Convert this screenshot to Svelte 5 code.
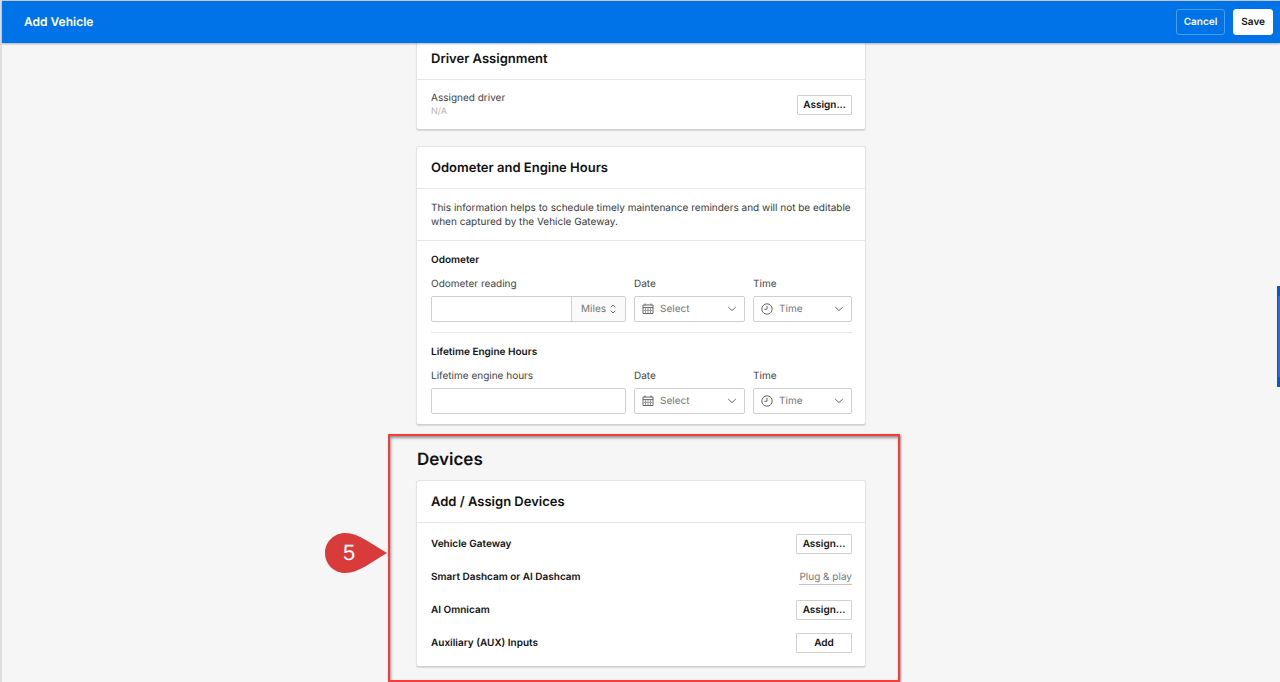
<script>
  const groups = [
    { id: "odometer", title: "Odometer", label: "Odometer reading", unit: true },
    { id: "engine", title: "Lifetime Engine Hours", label: "Lifetime engine hours", unit: false },
  ];

  const devices = [
    { name: "Vehicle Gateway", action: "Assign..." },
    { name: "Smart Dashcam or AI Dashcam", link: "Plug & play" },
    { name: "AI Omnicam", action: "Assign..." },
    { name: "Auxiliary (AUX) Inputs", action: "Add" },
  ];
</script>

{#snippet chevron()}
  <svg class="chevron" width="10" height="6" viewBox="0 0 10 6" aria-hidden="true">
    <path d="M1.2 1 L5 4.6 L8.8 1" />
  </svg>
{/snippet}

<div class="page">
  <header class="topbar">
    <h1>Add Vehicle</h1>
    <div class="topbar-actions">
      <button class="cancel">Cancel</button>
      <button class="save">Save</button>
    </div>
  </header>

  <main>
    <section class="card first">
      <h2>Driver Assignment</h2>
      <div class="driver">
        <div>
          <div class="label">Assigned driver</div>
          <div class="empty">N/A</div>
        </div>
        <button class="btn">Assign...</button>
      </div>
    </section>

    <section class="card">
      <h2>Odometer and Engine Hours</h2>
      <p class="info">
        This information helps to schedule timely maintenance reminders and will not be editable
        when captured by the Vehicle Gateway.
      </p>
      {#each groups as group}
        <div class="group">
          <h3>{group.title}</h3>
          <div class="fields">
            <div class="field">
              <label for="{group.id}-value">{group.label}</label>
              <div class="box">
                <input id="{group.id}-value" type="text" />
                {#if group.unit}
                  <div class="unit">
                    <select aria-label="Unit">
                      <option>Miles</option>
                      <option>Kilometers</option>
                    </select>
                    <svg width="6" height="10" viewBox="0 0 6 10" aria-hidden="true">
                      <path d="M0.7 3.3 L3 1 L5.3 3.3 M0.7 6.7 L3 9 L5.3 6.7" />
                    </svg>
                  </div>
                {/if}
              </div>
            </div>
            <div class="field">
              <label for="{group.id}-date">Date</label>
              <div class="box picker">
                <select id="{group.id}-date"><option>Select</option></select>
                <svg class="icon" width="12" height="12" viewBox="0 0 12 12" aria-hidden="true">
                  <path d="M1 2 H11 V10.5 H1 Z M1 4.6 H11 M3 0.5 V2.5 M9 0.5 V2.5" />
                  <path class="thin" d="M3.5 5 V10 M6 5 V10 M8.5 5 V10 M2 7.5 H10" />
                </svg>
                {@render chevron()}
              </div>
            </div>
            <div class="field">
              <label for="{group.id}-time">Time</label>
              <div class="box picker">
                <select id="{group.id}-time"><option>Time</option></select>
                <svg class="icon" width="12" height="12" viewBox="0 0 12 12" aria-hidden="true">
                  <circle cx="6" cy="6" r="5.2" />
                  <path d="M6 2.8 V6.3 H3.3" />
                </svg>
                {@render chevron()}
              </div>
            </div>
          </div>
        </div>
      {/each}
    </section>

    <section class="devices">
      <div class="pin">
        <svg width="63" height="40" viewBox="0 0 63 40" aria-hidden="true">
          <path d="M20 0 C9 0 0 9 0 20 C0 31 9 40 20 40 C34 40 46 29 62 20 C46 11 34 0 20 0 Z" />
        </svg>
        <span>5</span>
      </div>
      <h2 class="devices-title">Devices</h2>
      <div class="card">
        <h2>Add / Assign Devices</h2>
        <ul>
          {#each devices as device}
            <li>
              <span>{device.name}</span>
              {#if device.link}
                <a href="#plug-and-play">{device.link}</a>
              {:else}
                <button class="btn wide">{device.action}</button>
              {/if}
            </li>
          {/each}
        </ul>
      </div>
    </section>
  </main>

  <button class="side-tab" aria-label="Help"></button>
</div>

<style>
  :global(body) {
    background: #f6f6f6;
  }

  .page,
  .page * {
    box-sizing: border-box;
  }

  .page {
    min-height: 100vh;
    border-top: 1px solid #c9cdd0;
    border-left: 2px solid #dedede;
    background: #f6f6f6;
    color: #111;
    font-family: Inter, "Liberation Sans", sans-serif;
    font-size: 10px;
    line-height: 14px;
    text-rendering: geometricPrecision;
  }

  h1,
  h2,
  h3,
  p,
  ul {
    margin: 0;
    padding: 0;
  }

  button,
  input,
  select {
    margin: 0;
    font: inherit;
    color: inherit;
    text-rendering: inherit;
  }

  .topbar {
    position: relative;
    z-index: 1;
    display: flex;
    align-items: center;
    justify-content: space-between;
    height: 42px;
    padding: 0 7px 0 22px;
    background: #0073e8;
    box-shadow: 0 1px 2px rgba(0, 0, 0, 0.3);
  }

  h1 {
    color: #fff;
    font-size: 12px;
    font-weight: 600;
  }

  .topbar-actions {
    display: flex;
    gap: 8px;
  }

  .topbar-actions button {
    height: 26px;
    padding: 0 7px;
    border: 1px solid #fff;
    border-radius: 3px;
    background: #fff;
    font-weight: 600;
  }

  .topbar-actions .cancel {
    border-color: #4c9df0;
    background: transparent;
    color: #fff;
  }

  main {
    width: 450px;
    max-width: 100%;
    margin: 0 auto;
  }

  .card {
    margin-bottom: 16px;
    border: 1px solid #e3e3e3;
    border-bottom-color: #d0d0d0;
    border-radius: 3px;
    background: #fff;
    box-shadow: 0 1px 1px rgba(0, 0, 0, 0.12);
  }

  /* scrolled part way under the top bar */
  .first {
    margin-top: -6px;
  }

  .card h2 {
    height: 42px;
    padding: 0 14px;
    border-bottom: 1px solid #e6e6e6;
    font-size: 13px;
    font-weight: 600;
    line-height: 42px;
  }

  .driver {
    display: flex;
    align-items: center;
    justify-content: space-between;
    padding: 11px 13px 10px 14px;
  }

  .label,
  label {
    color: #444;
  }

  .empty {
    color: #b5b5b5;
    font-size: 9px;
  }

  .btn {
    height: 20px;
    padding: 0 5px;
    border: 1px solid #d0d0d0;
    border-radius: 1px;
    background: #fff;
    font-weight: 600;
    line-height: 14px;
  }

  .wide {
    width: 56px;
  }

  .info {
    padding: 12px 14px 11px;
    border-bottom: 1px solid #e6e6e6;
    color: #3a3a3a;
  }

  .group {
    margin: 0 13px 0 14px;
    padding: 12px 0 10px;
  }

  .group + .group {
    border-top: 1px solid #e6e6e6;
  }

  h3 {
    margin-bottom: 10px;
    font-size: 10px;
    font-weight: 600;
  }

  .fields {
    display: grid;
    grid-template-columns: 195fr 111fr 99fr;
    gap: 8px;
  }

  .field {
    display: flex;
    flex-direction: column;
    gap: 5px;
    min-width: 0;
  }

  .box {
    display: flex;
    height: 26px;
    border: 1px solid #cfcfcf;
    border-radius: 2px;
    background: #fff;
    color: #757575;
    overflow: hidden;
  }

  .box input {
    flex: 1;
    min-width: 0;
    padding: 0 8px;
    border: 0;
    background: transparent;
  }

  .box select {
    grid-area: 1 / 1 / 2 / -1;
    height: 100%;
    padding: 0 0 0 25px;
    border: 0;
    background: transparent;
    appearance: none;
  }

  .box svg {
    grid-row: 1;
    fill: none;
    stroke: #666;
    stroke-width: 1;
    pointer-events: none;
  }

  .unit {
    display: grid;
    grid-template-columns: 1fr 15px;
    align-items: center;
    width: 54px;
    border-left: 1px solid #cfcfcf;
    background: #fafafa;
  }

  .unit select {
    padding-left: 9px;
  }

  .unit svg {
    grid-column: 2;
  }

  .picker {
    display: grid;
    grid-template-columns: 26px 1fr 17px;
    align-items: center;
  }

  .picker .icon {
    grid-column: 1;
    justify-self: center;
  }

  .picker .chevron {
    grid-column: 3;
  }

  .box .thin {
    stroke: #999;
  }

  /* highlighted block, wider than the cards around it */
  .devices {
    position: relative;
    margin: -7px -34px 0 -28px;
    padding: 11px 32px 13px 26px;
    border: 2px solid #fb3a3a;
    box-shadow:
      1px 1px 2px rgba(0, 0, 0, 0.4),
      inset 1px 2px 3px rgba(0, 0, 0, 0.4);
  }

  .devices-title {
    margin-bottom: 7px;
    padding-left: 1px;
    font-size: 17px;
    font-weight: 600;
    line-height: 26px;
  }

  .devices .card {
    margin-bottom: 0;
  }

  ul {
    display: flex;
    flex-direction: column;
    gap: 13px;
    padding: 11px 13px 13px 14px;
    list-style: none;
  }

  li {
    display: flex;
    align-items: center;
    justify-content: space-between;
    height: 20px;
    font-weight: 600;
  }

  li a {
    border-bottom: 1px solid #c4c4c4;
    color: #777;
    font-weight: 400;
    text-decoration: none;
  }

  .pin {
    position: absolute;
    top: 97px;
    left: -65px;
    display: grid;
    align-items: center;
    color: #fff;
    font-family: "Liberation Sans", Arial, sans-serif;
    font-size: 22px;
  }

  .pin svg {
    grid-area: 1 / 1;
    fill: #d93a3a;
  }

  .pin span {
    grid-area: 1 / 1;
    padding-left: 18px;
  }

  .side-tab {
    position: fixed;
    top: 42vh;
    right: 0;
    width: 3px;
    height: 101px;
    padding: 0;
    border: 1px solid #0a57c8;
    border-width: 10px 0 10px 1px;
    background: #3069d8;
  }
</style>
